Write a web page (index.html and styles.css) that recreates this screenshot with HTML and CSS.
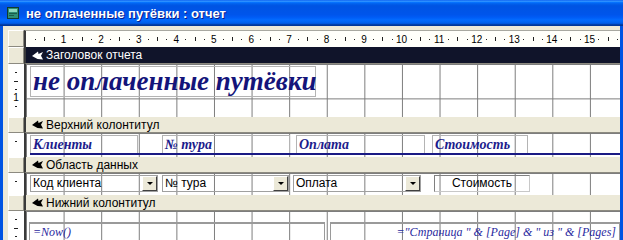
FILE: index.html
```html
<!DOCTYPE html>
<html lang="ru">
<head>
    <meta charset="UTF-8">
    <meta name="viewport" content="width=device-width, initial-scale=1.0">
    <title>не оплаченные путёвки : отчет</title>
    <link rel="stylesheet" href="styles.css">
</head>
<body>
    <div class="window">
        <div class="titlebar">
            <svg class="app-icon" width="12" height="12" viewBox="0 0 12 12">
                <rect x="0.5" y="0.5" width="11" height="11" fill="#2f8f74" stroke="#123a30"/>
                <rect x="2" y="2" width="8" height="3" fill="#8fd6bd"/>
                <rect x="2" y="6" width="8" height="1" fill="#1c5c4a"/>
                <rect x="2" y="8" width="5" height="1" fill="#1c5c4a"/>
            </svg>
            <span class="title">не оплаченные путёвки : отчет</span>
        </div>

        <div class="frame">
            <!-- horizontal ruler -->
            <div class="row ruler-row">
                <div class="side selector"></div>
                <div class="main hruler" id="hruler"></div>
            </div>

            <!-- report header -->
            <div class="row bar bar-active">
                <div class="side selector"></div>
                <div class="main bar-label">
                    <svg class="bar-icon" width="11" height="9" viewBox="0 0 11 9"><path d="M0 5 L6 0.5 L6.5 3 L11 1 L9 4.8 L11 8.5 L5.5 8 Z" fill="currentColor"/></svg>
                    Заголовок отчета
                </div>
            </div>
            <div class="row body report-header">
                <div class="side vruler"></div>
                <div class="main canvas">
                    <div class="report-title">не оплаченные путёвки</div>
                </div>
            </div>

            <!-- page header -->
            <div class="row bar">
                <div class="side selector"></div>
                <div class="main bar-label">
                    <svg class="bar-icon" width="11" height="9" viewBox="0 0 11 9"><path d="M0 5 L6 0.5 L6.5 3 L11 1 L9 4.8 L11 8.5 L5.5 8 Z" fill="currentColor"/></svg>
                    Верхний колонтитул
                </div>
            </div>
            <div class="row body page-header">
                <div class="side vruler"></div>
                <div class="main canvas">
                    <div class="header-line">
                        <div class="label label-clients">Клиенты</div>
                        <div class="label label-tour">№ тура</div>
                        <div class="label label-pay">Оплата</div>
                        <div class="label label-cost">Стоимость</div>
                    </div>
                </div>
            </div>

            <!-- detail -->
            <div class="row bar">
                <div class="side selector"></div>
                <div class="main bar-label">
                    <svg class="bar-icon" width="11" height="9" viewBox="0 0 11 9"><path d="M0 5 L6 0.5 L6.5 3 L11 1 L9 4.8 L11 8.5 L5.5 8 Z" fill="currentColor"/></svg>
                    Область данных
                </div>
            </div>
            <div class="row body detail">
                <div class="side vruler"></div>
                <div class="main canvas">
                    <div class="field combo combo-clients">Код клиента<span class="drop"></span></div>
                    <div class="field combo combo-tour">№ тура<span class="drop"></span></div>
                    <div class="field combo combo-pay">Оплата<span class="drop"></span></div>
                    <div class="field textbox">Стоимость</div>
                </div>
            </div>

            <!-- page footer -->
            <div class="row bar">
                <div class="side selector"></div>
                <div class="main bar-label">
                    <svg class="bar-icon" width="11" height="9" viewBox="0 0 11 9"><path d="M0 5 L6 0.5 L6.5 3 L11 1 L9 4.8 L11 8.5 L5.5 8 Z" fill="currentColor"/></svg>
                    Нижний колонтитул
                </div>
            </div>
            <div class="row body page-footer">
                <div class="side vruler"></div>
                <div class="main canvas">
                    <div class="expr expr-date">=Now()</div>
                    <div class="expr expr-pages">="Страница " &amp; [Page] &amp; " из " &amp; [Pages]</div>
                </div>
            </div>
        </div>
    </div>

    <script>
        // ruler marks: quarter dot, half tick, full centimetre number
        function makeMark(k) {
            const slot = document.createElement('span');
            slot.className = 'slot';
            if (k % 4 === 0) {
                slot.textContent = k / 4;
            } else {
                const m = document.createElement('i');
                m.className = k % 4 === 2 ? 'half' : 'quarter';
                slot.appendChild(m);
            }
            return slot;
        }

        const hruler = document.getElementById('hruler');
        for (let k = 1; k <= 63; k++) {
            hruler.appendChild(makeMark(k));
        }

        document.querySelectorAll('.vruler').forEach(ruler => {
            const count = Math.floor((ruler.clientHeight - 8) / 8.6);
            for (let k = 1; k <= count; k++) {
                ruler.appendChild(makeMark(k));
            }
        });
    </script>
</body>
</html>
```

FILE: styles.css
```css
* {
    box-sizing: border-box;
}

body {
    margin: 0;
    background: #ffffff;
    font-family: 'Liberation Sans', Arial, sans-serif;
}

.window {
    width: 623px;
    height: 240px;
    overflow: hidden;
    display: flex;
    flex-direction: column;
    background: #0054e3;
}

/* XP title bar */
.titlebar {
    flex: none;
    height: 26px;
    display: flex;
    align-items: center;
    gap: 7px;
    padding-left: 7px;
    background: linear-gradient(to bottom, #0058ee 0%, #3a93ff 4%, #288eff 6%, #127dff 8%, #036ffc 10%, #0262ee 14%, #0057e5 20%, #0054e3 24%, #0055eb 56%, #005bf5 66%, #026afe 76%, #0062ef 86%, #0052d6 92%, #0040ab 94%, #003092 100%);
}

.app-icon {
    flex: none;
}

.title {
    color: #ffffff;
    font-size: 13px;
    font-weight: bold;
    text-shadow: 1px 1px #0a1c8a;
}

.frame {
    flex: 1;
    margin: 0 3px;
    padding: 4px 0 0 5px;
    background: #ece9d8;
    display: flex;
    flex-direction: column;
}

.row {
    display: flex;
    flex: none;
}

.side {
    width: 16px;
    flex: none;
}

.main {
    flex: 1;
    border-left: 2px solid #3a3a3a;
}

.selector {
    background: #ece9d8;
    border: 1px solid;
    border-color: #ffffff #8c8a80 #8c8a80 #ffffff;
}

/* rulers */
.ruler-row {
    height: 17px;
}

.hruler {
    display: flex;
    align-items: center;
    padding-left: 4.7px;
    background: #fffffa;
    border-top: 1px solid #a8a8a0;
    overflow: hidden;
    font-size: 10px;
    color: #000000;
}

.hruler .slot {
    flex: none;
    width: 9.4px;
    display: flex;
    justify-content: center;
    align-items: center;
}

.hruler .quarter {
    width: 1px;
    height: 1px;
    background: #202020;
}

.hruler .half {
    width: 1px;
    height: 4px;
    background: #202020;
}

.vruler {
    background: #ffffff;
    padding-top: 4.3px;
    overflow: hidden;
    font-size: 10px;
    line-height: 1;
}

.vruler .slot {
    height: 8.6px;
    display: flex;
    justify-content: center;
    align-items: center;
}

.vruler .quarter {
    width: 2px;
    height: 1px;
    background: #202020;
}

.vruler .half {
    width: 4px;
    height: 1px;
    background: #202020;
}

/* section bars */
.bar {
    height: 16px;
}

.bar-label {
    display: flex;
    align-items: center;
    gap: 3px;
    padding-left: 6px;
    font-size: 12px;
    color: #000000;
    background: #ece9d8;
    border-bottom: 1px solid #8c8a80;
}

.bar-active {
    height: 17px;
}

.bar-active .bar-label {
    background: #10142a;
    color: #ffffff;
}

.bar-icon {
    flex: none;
}

/* design surface with 1 cm grid */
.canvas {
    background-color: #ffffff;
    background-image:
        linear-gradient(to right, #7c7c7c 1px, transparent 1px),
        linear-gradient(to bottom, #7c7c7c 1px, transparent 1px);
    background-size: 37.6px 34.4px;
    background-position: 0 0;
}

.report-header {
    height: 53px;
}

.report-header .canvas {
    padding: 2px 0 0 4px;
}

.report-title {
    width: 286px;
    height: 31px;
    border: 1px solid #b4b4b4;
    padding-left: 2px;
    font-family: 'Liberation Serif', 'Times New Roman', serif;
    font-size: 27px;
    font-weight: bold;
    font-style: italic;
    line-height: 29px;
    color: #14147a;
    white-space: nowrap;
}

.page-header {
    height: 24px;
}

.page-header .canvas {
    padding: 2px 0 0 4px;
}

.header-line {
    display: flex;
    border-bottom: 2px solid #1a1a84;
}

.label {
    height: 18px;
    border: 1px solid #b4b4b4;
    border-bottom: none;
    padding-left: 2px;
    font-family: 'Liberation Serif', 'Times New Roman', serif;
    font-size: 14px;
    font-weight: bold;
    font-style: italic;
    line-height: 17px;
    color: #1c1c8c;
    white-space: nowrap;
}

.label-clients { width: 108px; }
.label-tour { width: 128px; margin-left: 24px; }
.label-pay { width: 129px; margin-left: 6px; }
.label-cost { width: 96px; margin-left: 7px; }

.detail {
    height: 22px;
}

.detail .canvas {
    display: flex;
    padding: 2px 0 0 4px;
}

.field {
    height: 17px;
    border: 1px solid #a0a0a0;
    font-size: 12px;
    line-height: 15px;
    padding-left: 2px;
    color: #000000;
    white-space: nowrap;
}

.combo {
    display: flex;
    justify-content: space-between;
}

.combo-clients { width: 128px; }
.combo-tour { width: 127px; margin-left: 4px; }
.combo-pay { width: 128px; margin-left: 4px; }

.drop {
    width: 15px;
    height: 15px;
    flex: none;
    display: flex;
    align-items: center;
    justify-content: center;
    background: #ece9d8;
    border: 1px solid;
    border-color: #ffffff #404040 #404040 #ffffff;
}

.drop::after {
    content: '';
    border-left: 3px solid transparent;
    border-right: 3px solid transparent;
    border-top: 3px solid #000000;
}

.textbox {
    width: 96px;
    margin-left: 13px;
    text-align: center;
    padding-left: 0;
    border-color: #808080 #c8c8c8 #c8c8c8 #808080;
}

.page-footer {
    flex: 1;
}

.page-footer .canvas {
    display: flex;
    padding: 11px 0 0 3px;
}

.expr {
    height: 30px;
    border: 1px solid #9a9a9a;
    border-top-width: 2px;
    padding: 1px 3px 0 3px;
    font-family: 'Liberation Serif', 'Times New Roman', serif;
    font-size: 12px;
    font-style: italic;
    color: #2a2aa0;
    white-space: nowrap;
}

.expr-date {
    width: 296px;
}

.expr-pages {
    flex: 1;
    margin-left: 5px;
    text-align: right;
}
```
